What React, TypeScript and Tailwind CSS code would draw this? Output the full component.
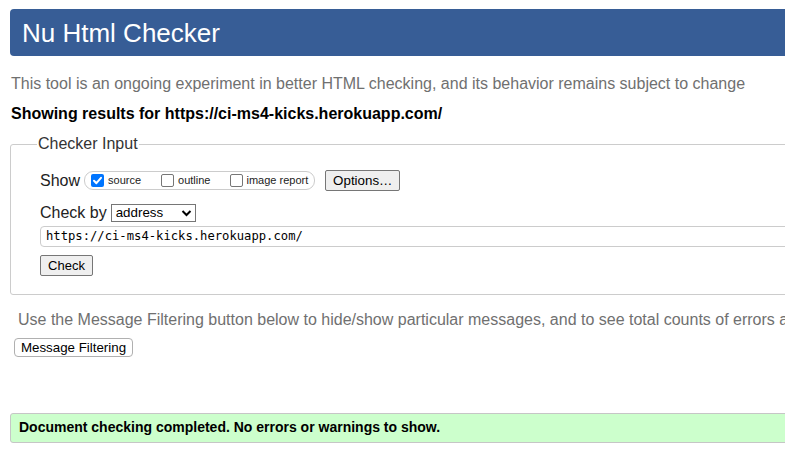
import React from 'react';

function Checkbox({ checked }: { checked?: boolean }) {
  if (checked) {
    return (
      <span className="flex h-[13px] w-[13px] shrink-0 items-center justify-center rounded-[2px] bg-[#0075ff]">
        <svg width="11" height="11" viewBox="0 0 11 11" fill="none">
          <path d="M2 5.8 L4.4 8.2 L9 2.8" stroke="white" strokeWidth="2" strokeLinecap="round" strokeLinejoin="round" />
        </svg>
      </span>
    );
  }
  return <span className="h-[13px] w-[13px] shrink-0 rounded-[2px] border border-[#767676] bg-white" />;
}

export default function App() {
  return (
    <div className="h-[458px] w-[785px] overflow-hidden bg-white font-['Liberation_Sans',Arial,sans-serif] text-[#222]">
      <div className="w-[1000px] pl-[10px] pt-[9px]">
        <div className="flex h-[47px] items-center rounded-[4px] bg-[#375d96] px-[12px] text-[26px] leading-none text-white">
          Nu Html Checker
        </div>

        <p className="mt-[19px] pl-px text-[16px] leading-[18px] text-[#707070]">
          This tool is an ongoing experiment in better HTML checking, and its behavior remains subject to change
        </p>
        <p className="mt-[12px] pl-px text-[16px] font-bold leading-[18px] text-black">
          Showing results for https://ci-ms4-kicks.herokuapp.com/
        </p>

        <fieldset className="mt-[12px] rounded-[3px] border border-[#cccccc] pb-[17px] pl-[29px]">
          <legend className="-ml-[3px] px-px text-[16px] leading-[18px] text-[#333]">Checker Input</legend>

          <div className="mt-[17px] flex h-[21px] items-center">
            <span className="text-[16px] leading-[18px]">Show</span>
            <div className="ml-[4px] flex h-[19px] items-center rounded-[9px] border border-[#cccccc] pl-[6px] pr-[6px] text-[11px]">
              <Checkbox checked />
              <span className="ml-[4px]">source</span>
              <span className="ml-[20px]" />
              <Checkbox />
              <span className="ml-[4px]">outline</span>
              <span className="ml-[20px]" />
              <Checkbox />
              <span className="ml-[3px]">image report</span>
            </div>
            <button className="ml-[10px] h-[21px] w-[75px] rounded-[2px] border border-[#767676] bg-[#efefef] text-[13.33px] leading-none text-black">
              Options…
            </button>
          </div>

          <div className="mt-[13px] flex h-[18px] items-center">
            <span className="text-[16px] leading-[18px]">Check by</span>
            <div className="ml-[4px] flex h-[18px] w-[85px] items-center justify-between border border-[#767676] pl-[4px] pr-[3px] text-[13.33px] text-black">
              <span>address</span>
              <svg width="11" height="8" viewBox="0 0 11 8" fill="none">
                <path d="M1.5 2 L5.5 6 L9.5 2" stroke="black" strokeWidth="2" />
              </svg>
            </div>
          </div>

          <div className="mt-[4px] flex h-[21px] items-center rounded-[4px] border border-[#cccccc] pl-[5px] font-['DejaVu_Sans_Mono',monospace] text-[12.2px] text-black">
            https://ci-ms4-kicks.herokuapp.com/
          </div>

          <button className="mt-[8px] h-[21px] w-[53px] rounded-[2px] border border-[#767676] bg-[#efefef] text-[13px] leading-none text-black">
            Check
          </button>
        </fieldset>

        <p className="mt-[16px] whitespace-nowrap pl-[8px] text-[16px] leading-[18px] text-[#707070]">
          Use the Message Filtering button below to hide/show particular messages, and to see total counts of errors and warnings.
        </p>
        <button className="mt-[9px] ml-[4px] h-[19px] w-[119px] rounded-[4px] border border-[#b0b0b0] bg-white text-[13.33px] leading-none text-black">
          Message Filtering
        </button>

        <div className="mt-[54px] flex h-[30px] items-center rounded-[3px] border border-[#c6c6c6] bg-[#ccffcc] pl-[8px] text-[14px] font-bold text-black">
          Document checking completed. No errors or warnings to show.
        </div>
      </div>
    </div>
  );
}
